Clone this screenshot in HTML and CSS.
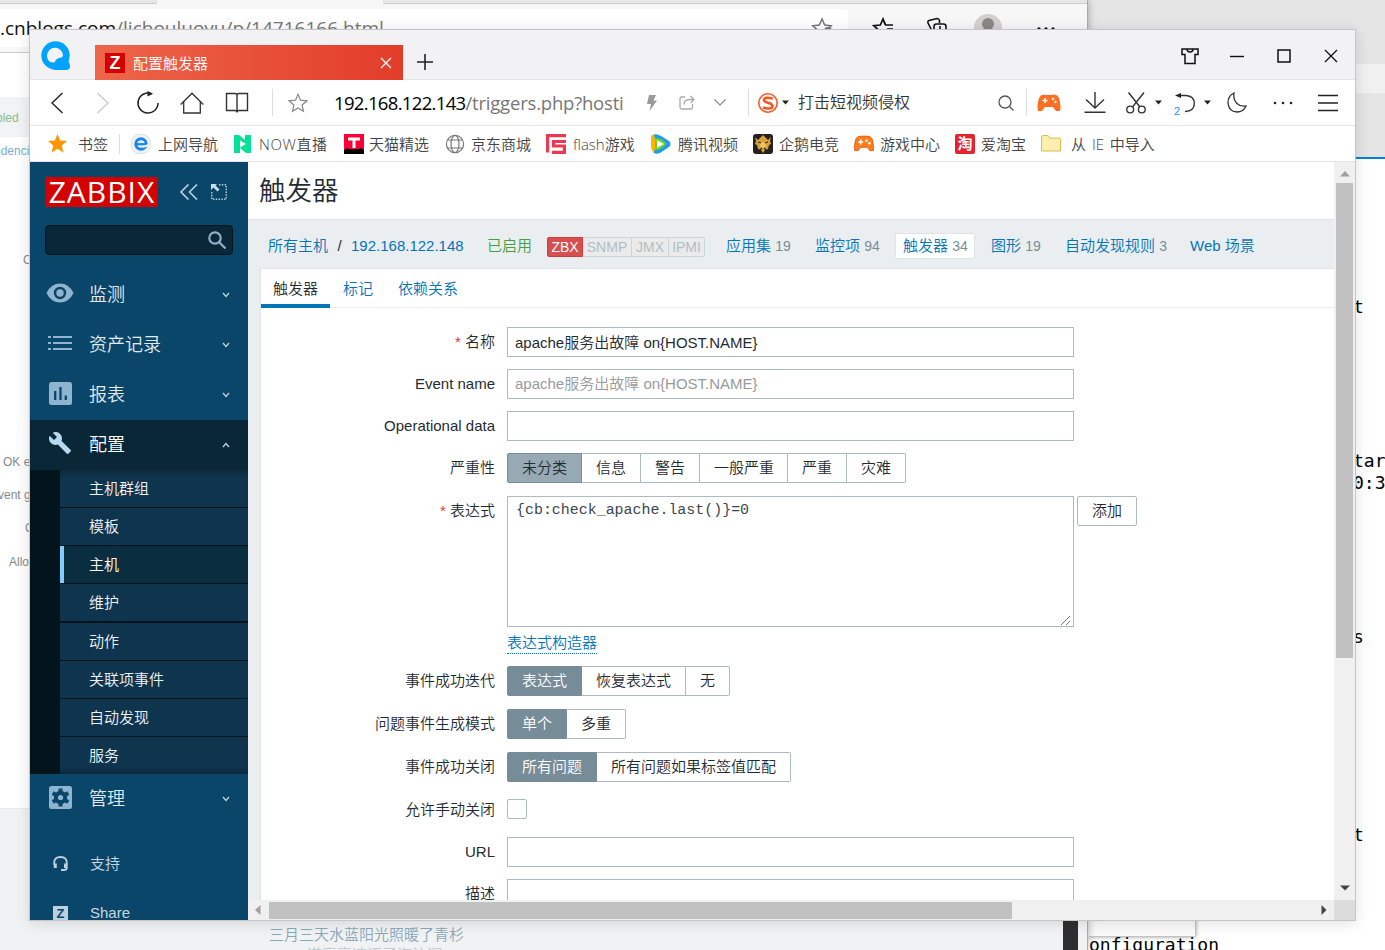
FILE: index.html
```html
<!DOCTYPE html>
<html lang="zh-CN">
<head>
  <meta charset="UTF-8" />
  <title>配置触发器</title>
  <link rel="stylesheet" href="styles.css">
</head>
<body>
<div class="desktop">

  <!-- terminal window in the back -->
  <div class="term-head"><div class="term-strip"></div></div>
  <div class="term-popup"></div>
  <span class="term t1">t</span>
  <span class="term t2">tar</span>
  <span class="term t3">0:3</span>
  <span class="term t4">s</span>
  <span class="term t5">t</span>
  <span class="term t6">onfiguration</span>
  <div class="dark-bar"></div>

  <!-- blog window in the back -->
  <div class="blog">
    <div class="blog-tabs"><div class="blog-tab"></div></div>
    <div class="blog-bar">
      <div class="blog-url">
        <span><b>.cnblogs.com</b>/lichouluoyu/p/14716166.html</span>
        <svg width="22" height="22" viewBox="0 0 22 22" fill="none" stroke="#777" stroke-width="1.5"><path d="M11 2l2.700 6 6.500.7-4.800 4.400 1.300 6.400L11 16.200l-5.700 3.300 1.300-6.400L1.800 8.700 8.300 8z"/><circle cx="17" cy="14" r="4" fill="#777" stroke="none"/></svg>
      </div>
      <div class="blog-icons">
        <svg width="22" height="22" viewBox="0 0 22 22" fill="none" stroke="#111" stroke-width="1.700"><path d="M13 7.500L11 2 8.300 8 1.800 8.700l4.800 4.400-1.300 6.400M11 2l2.700 6H21M15 12h6"/></svg>
        <svg width="22" height="22" viewBox="0 0 22 22" fill="none" stroke="#111" stroke-width="1.600"><path d="M6 14L2 6q-.5-2 1-2.500l8-2q2 0 2.500 2V6"/><rect x="8" y="7" width="12" height="12" rx="2.500"/><path d="M14 9v8"/></svg>
        <svg width="28" height="28" viewBox="0 0 28 28"><circle cx="14" cy="14" r="14" fill="#d2d0ce"/><circle cx="14" cy="10" r="6" fill="#8a8886"/></svg>
        <svg width="20" height="22" viewBox="0 0 20 22" fill="#111"><circle cx="3" cy="12" r="1.700"/><circle cx="10" cy="12" r="1.700"/><circle cx="17" cy="12" r="1.700"/></svg>
      </div>
    </div>
    <div class="blog-row"></div>
    <div class="blog-foot"></div>
    <span class="ghost g1">bled</span>
    <span class="ghost g2">ndencies</span>
    <span class="ghost g3">OK</span>
    <span class="ghost g4">OK event</span>
    <span class="ghost g5">vent generation</span>
    <span class="ghost g6">OK</span>
    <span class="ghost g7">Allow</span>
    <span class="poem p1">三月三天水蓝阳光照暖了青杉</span>
    <span class="poem p2">一道亮亮遮语了海沽润</span>
  </div>

  <div class="window">
    <div class="titlebar">
      <div class="logo">
        <svg width="30" height="30" viewBox="0 0 30 30"><circle cx="14.500" cy="14.500" r="14.200" fill="#00a3ff"/><path d="M18 20h9q2 2 2 5 0 4-4 4H13z" fill="#00a3ff"/><path d="M8.500 20.500A8 8 0 1 1 22 15q-1 2-4 2-3.500 1-4.500 4.500-3 .3-5-1z" fill="#f3f3f5"/></svg>
      </div>
      <div class="tab">
        <span class="tab-icon">Z</span>
        <span class="tab-text">配置触发器</span>
        <svg width="12" height="12" viewBox="0 0 12 12" stroke="#fff" stroke-width="1.300"><path d="M1 1l10 10M11 1L1 11"/></svg>
      </div>
      <svg class="new-tab" width="18" height="18" viewBox="0 0 18 18" stroke="#222" stroke-width="1.600"><path d="M9 1v16M1 9h16"/></svg>
      <div class="win-btns">
        <svg width="20" height="18" viewBox="0 0 20 18" fill="none" stroke="#111" stroke-width="1.500"><path d="M2 2h16v5.500h-3V16.500H5V7.500H2z"/><path d="M7 2q0 3 3 3t3-3"/></svg>
        <svg width="14" height="14" viewBox="0 0 14 14" stroke="#111" stroke-width="1.400"><path d="M0 7.500h14"/></svg>
        <svg width="14" height="14" viewBox="0 0 14 14" fill="none" stroke="#111" stroke-width="1.500"><rect x="1" y="1" width="12" height="12"/></svg>
        <svg width="14" height="14" viewBox="0 0 14 14" stroke="#111" stroke-width="1.300"><path d="M1 1l12 12M13 1L1 13"/></svg>
      </div>
    </div>

    <div class="toolbar">
      <svg width="12" height="22" viewBox="0 0 12 22" fill="none" stroke="#222" stroke-width="1.400"><path d="M11.500 1L1 11l10.500 10"/></svg>
      <svg width="12" height="22" viewBox="0 0 12 22" fill="none" stroke="#ccc" stroke-width="1.400"><path d="M.5 1L11 11 .5 21"/></svg>
      <svg width="24" height="24" viewBox="0 0 24 24" fill="none" stroke="#222" stroke-width="1.500"><path d="M15.500 2.700A10 10 0 1 0 22 12"/><path d="M11.500 0v5.500l5.500-2.700z" fill="#222" stroke="none"/></svg>
      <svg width="24" height="22" viewBox="0 0 24 22" fill="none" stroke="#333" stroke-width="1.300"><path d="M.7 12.500L12 1.200l11.300 11.300M3.700 10v11h16.600V10"/></svg>
      <svg width="24" height="22" viewBox="0 0 24 22" fill="none" stroke="#333" stroke-width="1.400"><path d="M1.500 1.500H10q2 0 2 2 0-2 2-2h8.500v17H14q-2 0-2 2 0-2-2-2H1.500zM12 3.500v17"/></svg>
      <i class="sep"></i>
      <svg width="20" height="20" viewBox="0 0 20 20" fill="none" stroke="#888" stroke-width="1.200"><path d="M10 1.300l2.500 5.900 6.400.6-4.800 4.200 1.400 6.300L10 15l-5.500 3.300L5.900 12 1.100 7.800l6.400-.6z"/></svg>
      <span class="url"><b>192.168.122.143</b>/triggers.php?hosti</span>
      <svg width="10" height="16" viewBox="0 0 10 16" fill="#999"><path d="M2 0h7L6.500 5.500H10L2.500 16 4 9H0z"/></svg>
      <svg width="16" height="15" viewBox="0 0 16 15" fill="none" stroke="#aaa" stroke-width="1.300"><path d="M6 2H2.500Q1 2 1 3.500v9Q1 14 2.500 14h9.500q1.500 0 1.500-1.500V9M5 9.500Q5 4.500 11 4.500h4M11.500 1L15 4.500 11.500 8"/></svg>
      <svg width="12" height="7" viewBox="0 0 12 7" fill="none" stroke="#888" stroke-width="1.200"><path d="M.5.5L6 6l5.500-5.500"/></svg>
      <i class="sep"></i>
      <svg width="20" height="20" viewBox="0 0 20 20" fill="none"><circle cx="10" cy="10" r="9.200" stroke="#fd5522" stroke-width="1.600"/><path d="M14.800 5.500Q6 3.500 6 7c0 3.300 8.500 2 8.500 6 0 3.500-6 2.800-9.500 1.500" stroke="#fd5522" stroke-width="2.600"/></svg>
      <svg width="7" height="5" viewBox="0 0 7 5" fill="#222"><path d="M0 .5h7L3.500 4.500z"/></svg>
      <span class="search-text">打击短视频侵权</span>
      <svg width="16" height="16" viewBox="0 0 16 16" fill="none" stroke="#555" stroke-width="1.300"><circle cx="7" cy="7" r="6"/><path d="M11.500 11.500l4 4"/></svg>
      <i class="sep"></i>
      <svg width="24" height="18" viewBox="0 0 24 18"><path d="M5 1q2-1 4 0h6q2-1 4 0 3 1 4 7 1 6 0 9h-4l-3-4H8l-3 4H1Q0 14 1 8q1-6 4-7z" fill="#ff6f1f"/><path d="M8 4v5M5.500 6.500h5" stroke="#fff" stroke-width="1.600"/><circle cx="16" cy="5" r="1.200" fill="#fff"/><circle cx="18.500" cy="8" r="1.200" fill="#fff"/></svg>
      <svg width="22" height="22" viewBox="0 0 22 22" fill="none" stroke="#333" stroke-width="1.400"><path d="M11 0v16M2 7.500l9 8.500 9-8.500M.5 20.200h21"/></svg>
      <svg width="20" height="22" viewBox="0 0 20 22" fill="none" stroke="#333" stroke-width="1.400"><path d="M2.500.5L14 15M18 .5L6.500 15"/><circle cx="4.200" cy="17.500" r="3.400"/><circle cx="15.800" cy="17.500" r="3.400"/></svg>
      <svg width="7" height="5" viewBox="0 0 7 5" fill="#222"><path d="M0 .5h7L3.500 4.500z"/></svg>
      <span class="undo">
        <svg width="20" height="20" viewBox="0 0 20 20" fill="none" stroke="#333" stroke-width="1.400"><path d="M3 2.500h8q8.300.5 8.300 8 0 7.500-9.300 8"/><path d="M0 2.500L6 0v5z" fill="#222" stroke="none"/></svg>
        <small>2</small>
      </span>
      <svg width="7" height="5" viewBox="0 0 7 5" fill="#222"><path d="M0 .5h7L3.500 4.500z"/></svg>
      <svg width="20" height="21" viewBox="0 0 20 21" fill="none" stroke="#333" stroke-width="1.300"><path d="M7 1Q1 4 1 10.500 1.500 19.500 10 20q6.500 0 9-6-5.500 1-9-2.500Q6 7.500 7 1z"/></svg>
      <svg width="20" height="4" viewBox="0 0 20 4" fill="#222"><circle cx="2" cy="2" r="1.300"/><circle cx="10" cy="2" r="1.300"/><circle cx="18" cy="2" r="1.300"/></svg>
      <svg width="20" height="18" viewBox="0 0 20 18" stroke="#222" stroke-width="1.400"><path d="M0 1.500h20M0 9h20M0 16.500h20"/></svg>
    </div>

    <div class="bookmarks">
      <div class="bm wide"><svg width="19" height="19" viewBox="0 0 19 19"><path d="M9.500 0l2.700 6.400 6.800.6-5.200 4.500 1.600 7-5.900-3.700-5.900 3.700 1.600-7L0 7l6.800-.6z" fill="#ff9500"/></svg>书签<i></i></div>
      <div class="bm"><svg width="20" height="20" viewBox="0 0 20 20"><rect x=".5" y=".5" width="19" height="19" rx="8" fill="#f1f3f5" stroke="#dde1e5"/><circle cx="10" cy="10" r="5.200" fill="none" stroke="#1586f5" stroke-width="3"/><path d="M6 10.200h9" stroke="#1586f5" stroke-width="2.200"/><path d="M12 13l5-1.800" stroke="#f1f3f5" stroke-width="2"/></svg>上网导航</div>
      <div class="bm now"><svg width="20" height="20" viewBox="0 0 20 20"><path d="M1 1h5l6 5V1h6v18h-5l-6-5v5H1z" fill="#00e29a"/><path d="M7 6.500l6 3.500-6 3.500z" fill="#fff"/></svg><span>NOW直播</span></div>
      <div class="bm t"><svg width="20" height="20" viewBox="0 0 20 20"><path d="M0 0h20v20H0z" fill="#ff0036"/><path d="M0 16q2-1 3-2l2 1h10l2-1q1 1 3 2v4H0z" fill="#000"/><path d="M4 5h12M10 5v9" stroke="#fff" stroke-width="3"/></svg>天猫精选</div>
      <div class="bm s6"><svg width="20" height="20" viewBox="0 0 20 20" fill="none" stroke="#777" stroke-width="1.200"><circle cx="10" cy="10" r="8.600"/><ellipse cx="10" cy="10" rx="4" ry="8.600"/><path d="M2.500 6h15M2.500 14h15"/></svg>京东商城</div>
      <div class="bm flash"><svg width="20" height="20" viewBox="0 0 20 20" fill="none" stroke="#e93a52" stroke-width="3.200"><path d="M20 1.600H1.600v17M20 7.500H7.500v4.500M6 12h12.400v6.400H6"/></svg><span>flash</span>游戏</div>
      <div class="bm"><svg width="20" height="20" viewBox="0 0 20 20"><path d="M2 1q3-2 8 1l8 5q3 3 0 6l-9 6q-5 2-7-1z" fill="#1c9cf5"/><path d="M0 4q0-4 3-3l2 9-2 9q-3-3-3-7z" fill="#ffb400"/><path d="M4 4q8 0 11 6-4 6-11 6z" fill="#6fd126"/><path d="M6 6l7 4-7 4z" fill="#fff"/></svg>腾讯视频</div>
      <div class="bm s6"><svg width="20" height="20" viewBox="0 0 20 20"><rect width="20" height="20" rx="3" fill="#24211f"/><path d="M2 3l3 3 2-2 3-3 3 3 2 2 3-3-1 4 1 3-2 1-1 4-3 1-2 3-2-3-3-1-1-4-2-1 1-3z" fill="#d9a13a"/><circle cx="10" cy="11" r="2.800" fill="#f0c66a"/><path d="M5 8l3 1M15 8l-3 1M7 16l2-2M13 16l-2-2" stroke="#3a2a14" stroke-width="1.300" fill="none"/></svg>企鹅电竞</div>
      <div class="bm s6"><svg width="20" height="18" viewBox="0 0 24 20"><path d="M5 1q7-1 14 0 3 1 4 8 1 6 0 9h-4l-3-4H8l-3 4H1Q0 15 1 9q1-7 4-8z" fill="#ff7d1a" stroke="#e0560a"/><path d="M8 4.500v6M5 7.500h6" stroke="#fff" stroke-width="1.800"/><circle cx="15" cy="6" r="1.500" fill="#fff"/><circle cx="18.500" cy="9" r="1.500" fill="#fff"/></svg>游戏中心</div>
      <div class="bm s6"><span class="tao">淘</span>爱淘宝</div>
      <div class="bm folder"><svg width="20" height="17" viewBox="0 0 20 17"><path d="M.6 16V1.600Q.6.600 1.600.6H7l2 2.500h9.500q1 0 1 1V16z" fill="#fff0ad" stroke="#dcb857"/></svg><span>从 IE 中导入</span></div>
    </div>

    <div class="content">
      <aside class="sidebar">
        <div class="brand">
          <span class="zabbix">ZABBIX</span>
          <svg width="18" height="16" viewBox="0 0 18 16" fill="none" stroke="#b7cbd8" stroke-width="1.700"><path d="M8.500.5L1 8l7.500 7.500M17 .5L9.500 8l7.500 7.500"/></svg>
          <svg width="16" height="16" viewBox="0 0 16 16" fill="none"><path d="M8 .8h7.300v14.400H.8V8" stroke="#b7cbd8" stroke-width="1.500" stroke-dasharray="1.500 1.300"/><path d="M0 0h6L4.500 1.500l4 4-2 2-4-4L0 6z" fill="#cddde6"/></svg>
        </div>
        <div class="search">
          <svg width="19" height="19" viewBox="0 0 19 19" fill="none" stroke="#8fb0c6" stroke-width="2.200"><circle cx="7" cy="7" r="5.700"/><path d="M11 11l6.500 6.500"/></svg>
        </div>
        <nav class="menu">
          <a class="item">
            <svg width="28" height="20" viewBox="0 0 28 20"><path d="M14 .5Q23 .5 27.500 10 23 19.500 14 19.500T.5 10Q5 .5 14 .5z" fill="#8fb4d0"/><circle cx="14" cy="10" r="6.200" fill="#0a466a"/><circle cx="14" cy="10" r="3.700" fill="#8fb4d0"/></svg>
            <span>监测</span><svg class="arr" width="8" height="6" viewBox="0 0 8 6"><path d="M1 1l3 3.500L7 1"/></svg>
          </a>
          <a class="item">
            <svg width="24" height="14" viewBox="0 0 24 14" stroke="#8fb4d0" stroke-width="2"><path d="M0 1h3M5 1h19M0 7h3M5 7h19M0 13h3M5 13h19"/></svg>
            <span>资产记录</span><svg class="arr" width="8" height="6" viewBox="0 0 8 6"><path d="M1 1l3 3.500L7 1"/></svg>
          </a>
          <a class="item">
            <svg width="23" height="23" viewBox="0 0 23 23"><rect width="23" height="23" rx="2.500" fill="#8fb4d0"/><path d="M6.200 9v9M11.500 5v13M16.800 13.500V18" stroke="#0a466a" stroke-width="2.300"/></svg>
            <span>报表</span><svg class="arr" width="8" height="6" viewBox="0 0 8 6"><path d="M1 1l3 3.500L7 1"/></svg>
          </a>
          <a class="item open">
            <svg width="24" height="24" viewBox="0 0 24 24"><path d="M22.700 19l-9.100-9.100c.9-2.300.4-5-1.500-6.900-2-2-5-2.400-7.400-1.300L9 6 6 9 1.600 4.700C.4 7.100.9 10.100 2.900 12.100c1.900 1.900 4.600 2.400 6.900 1.500l9.100 9.100c.4.4 1 .4 1.400 0l2.300-2.300c.5-.4.5-1.100.1-1.400z" fill="#b7d9f0"/></svg>
            <span>配置</span><svg class="arr" width="8" height="6" viewBox="0 0 8 6"><path d="M1 5l3-3.500L7 5"/></svg>
          </a>
          <div class="submenu">
            <a>主机群组</a>
            <a>模板</a>
            <a class="active">主机</a>
            <a class="last">维护</a>
            <a>动作</a>
            <a>关联项事件</a>
            <a>自动发现</a>
            <a>服务</a>
          </div>
          <a class="item">
            <svg width="23" height="23" viewBox="0 0 23 23"><rect width="23" height="23" rx="2.500" fill="#8fb4d0"/><circle cx="11.500" cy="11.500" r="4.600" fill="none" stroke="#0a466a" stroke-width="4.200"/><path d="M11.500 2.500v18M3.700 7l15.600 9M3.700 16l15.600-9" stroke="#0a466a" stroke-width="4"/><circle cx="11.500" cy="11.500" r="2.600" fill="#8fb4d0"/></svg>
            <span>管理</span><svg class="arr" width="8" height="6" viewBox="0 0 8 6"><path d="M1 1l3 3.500L7 1"/></svg>
          </a>
        </nav>
        <nav class="links">
          <a class="item">
            <svg width="15" height="15" viewBox="0 0 15 15" fill="none" stroke="#bdd0dd" stroke-width="1.800"><path d="M1.200 9V7q0-6 6.300-6t6.300 6v5q0 2-3 2H8"/><path d="M2.300 7.500v4.500M12.500 7.500v4.500" stroke-width="3"/></svg>
            <span>支持</span>
          </a>
          <a class="item">
            <span class="zicon">Z</span>
            <span>Share</span>
          </a>
        </nav>
      </aside>

      <main class="page">
        <header class="page-head"><h1>触发器</h1></header>
        <div class="host-nav">
          <a class="hosts">所有主机</a><em>/</em><a class="host">192.168.122.148</a>
          <span class="enabled">已启用</span>
          <div class="avail"><b>ZBX</b><span class="snmp">SNMP</span><span class="jmx">JMX</span><span class="ipmi">IPMI</span></div>
          <a class="n1">应用集 <sup>19</sup></a>
          <a class="n2">监控项 <sup>94</sup></a>
          <a class="n3 selected">触发器 <sup>34</sup></a>
          <a class="n4">图形 <sup>19</sup></a>
          <a class="n5">自动发现规则 <sup>3</sup></a>
          <a class="n6">Web 场景</a>
        </div>
        <div class="form">
          <div class="tabs"><a class="current">触发器</a><a>标记</a><a>依赖关系</a></div>
          <div class="rows">
            <div class="row"><label class="req">名称</label><div class="input">apache服务出故障 on{HOST.NAME}</div></div>
            <div class="row"><label>Event name</label><div class="input hint">apache服务出故障 on{HOST.NAME}</div></div>
            <div class="row"><label>Operational data</label><div class="input"></div></div>
            <div class="row seg-row"><label>严重性</label>
              <div class="seg severity"><span class="on">未分类</span><span>信息</span><span>警告</span><span class="avg">一般严重</span><span>严重</span><span>灾难</span></div>
            </div>
            <div class="row expr"><label class="req">表达式</label>
              <div class="area">{cb:check_apache.last()}=0<svg width="9" height="9" viewBox="0 0 9 9" stroke="#777"><path d="M0 9l9-9M5 9l4-4"/></svg></div>
              <div class="btn">添加</div>
            </div>
            <div class="row builder"><label></label><a>表达式构造器</a></div>
            <div class="row seg-row"><label>事件成功迭代</label>
              <div class="seg"><span class="on">表达式</span><span>恢复表达式</span><span>无</span></div>
            </div>
            <div class="row seg-row"><label>问题事件生成模式</label>
              <div class="seg"><span class="on">单个</span><span>多重</span></div>
            </div>
            <div class="row seg-row"><label>事件成功关闭</label>
              <div class="seg"><span class="on">所有问题</span><span>所有问题如果标签值匹配</span></div>
            </div>
            <div class="row"><label>允许手动关闭</label><div class="check"></div></div>
            <div class="row"><label>URL</label><div class="input"></div></div>
            <div class="row"><label>描述</label><div class="input"></div></div>
          </div>
        </div>
      </main>

      <div class="vscroll">
        <svg width="10" height="6" viewBox="0 0 10 6" fill="#a0a0a0"><path d="M0 5.500L5 0l5 5.500z"/></svg>
        <div class="vthumb"></div>
        <svg class="down" width="10" height="6" viewBox="0 0 10 6" fill="#444"><path d="M0 .5h10L5 5.500z"/></svg>
      </div>
      <div class="hscroll">
        <svg width="6" height="10" viewBox="0 0 6 10" fill="#a0a0a0"><path d="M5.500 0v10L0 5z"/></svg>
        <div class="hthumb"></div>
        <svg class="right" width="6" height="10" viewBox="0 0 6 10" fill="#444"><path d="M.5 0v10l5-5z"/></svg>
      </div>
      <div class="corner"></div>
    </div>
  </div>
</div>
</body>
</html>
```
FILE: styles.css
```css
* {
  box-sizing: border-box;
}
body {
  margin: 0;
  font-family: "Liberation Sans", "Noto Sans CJK SC", sans-serif;
  font-size: 15px;
  font-weight: 350;
  color: #1f2c33;
}
svg {
  display: block;
  flex: none;
}
.desktop {
  position: relative;
  width: 1385px;
  height: 950px;
  overflow: hidden;
  background: #fff;
}

/* windows behind */
.term-head {
  position: absolute;
  left: 1088px;
  top: 0;
  width: 297px;
  height: 159px;
  padding-top: 64px;
  background: #e5e5e5;
  border-bottom: 2px solid #0082d9;
}
.term-strip {
  height: 29px;
  background: #f0f0f0;
}
.term {
  position: absolute;
  font-family: "DejaVu Sans Mono", monospace;
  font-size: 18px;
  font-weight: 400;
  line-height: 22px;
  color: #000;
  white-space: nowrap;
}
.t1 { left: 1353px; top: 296px; }
.t2 { left: 1353px; top: 450px; }
.t3 { left: 1353px; top: 472px; }
.t4 { left: 1353px; top: 626px; }
.t5 { left: 1353px; top: 824px; }
.t6 { left: 1089px; top: 934px; }
.term-popup {
  position: absolute;
  left: 1088px;
  top: 900px;
  width: 107px;
  height: 36px;
  background: #fafafa;
  box-shadow: 1px 1px 4px rgba(0, 0, 0, 0.4);
}
.dark-bar {
  position: absolute;
  z-index: 1;
  left: 1063px;
  top: 900px;
  width: 15px;
  height: 50px;
  background: #2f2f2f;
}
.blog {
  position: absolute;
  left: 0;
  top: 0;
  width: 1088px;
  height: 950px;
  overflow: hidden;
  background: #fff;
  border-right: 1px solid #aaa;
  box-shadow: 0 0 8px rgba(0, 0, 0, 0.3);
  clip-path: inset(0 -12px 0 0);
}
.blog-tabs {
  height: 4px;
  background: #e6e6e6;
  border-bottom: 1px solid #ccc;
}
.blog-tab {
  width: 226px;
  height: 4px;
  margin-left: 157px;
  background: #f7f7f7;
}
.blog-bar {
  display: flex;
  height: 49px;
  padding-top: 5px;
  background: #f7f7f7;
  border-bottom: 1px solid #c8c8c8;
}
.blog-url {
  display: flex;
  justify-content: space-between;
  width: 848px;
  height: 38px;
  padding-right: 15px;
  border-radius: 0 5px 5px 0;
  background: #fff;
  font-family: "Open Sans", sans-serif;
  font-size: 19px;
  font-weight: 400;
  line-height: 38px;
  color: #777;
}
.blog-url b {
  font-weight: 400;
  color: #111;
}
.blog-url svg {
  margin-top: 8px;
}
.blog-icons {
  display: flex;
  gap: 32px;
  padding: 8px 0 0 24px;
}
.blog-icons svg:nth-child(3) {
  margin: -3px 0 0 -6px;
}
.blog-icons svg:nth-child(4) {
  margin-left: 2px;
}
.blog-row {
  height: 40px;
  margin-top: 44px;
  background: #f1f3f4;
}
.blog-foot {
  height: 142px;
  margin-top: 671px;
  background: #f0f2f4;
  border-top: 1px solid #e6e8ea;
}
.ghost {
  position: absolute;
  font-size: 12px;
  line-height: 14px;
  color: #888;
  white-space: nowrap;
}
.g1 { left: -4px; top: 111px; color: #86bd8d; }
.g2 { left: -6px; top: 144px; color: #80aec9; }
.g3 { left: 23px; top: 253px; }
.g4 { left: 3px; top: 455px; }
.g5 { left: -2px; top: 488px; }
.g6 { left: 25px; top: 521px; }
.g7 { left: 9px; top: 555px; }
.poem {
  position: absolute;
  line-height: 20px;
  color: #8ba7b6;
  white-space: nowrap;
}
.p1 { left: 269px; top: 925px; }
.p2 { left: 292px; top: 945px; color: #bccad3; }

/* browser window */
.window {
  position: absolute;
  z-index: 2;
  left: 29px;
  top: 29px;
  width: 1327px;
  height: 892px;
  display: flex;
  flex-direction: column;
  border: 1px solid #c3c6c8;
  background: #fff;
  box-shadow: 0 2px 14px rgba(0, 0, 0, 0.12);
}
.titlebar {
  display: flex;
  align-items: flex-end;
  height: 50px;
  background: #f2f2f5;
  border-bottom: 1px solid #e3e4e6;
}
.logo {
  width: 65px;
  padding: 0 0 8px 11px;
}
.tab {
  display: flex;
  align-items: center;
  width: 308px;
  height: 35px;
  margin-bottom: -1px;
  padding: 0 11px 0 10px;
  color: #fff;
  background: linear-gradient(90deg, #ee6549, #e23d2a);
}
.tab-icon {
  width: 20px;
  height: 20px;
  margin-right: 8px;
  background: #d40000;
  font-size: 18px;
  font-weight: 700;
  line-height: 20px;
  text-align: center;
}
.tab-text {
  flex: 1;
}
.new-tab {
  margin: 0 0 8px 13px;
}
.win-btns {
  display: flex;
  align-items: center;
  gap: 33px;
  height: 50px;
  margin-left: auto;
  padding: 3px 17px 0 0;
}
.win-btns svg:nth-child(1) {
  margin-right: -3px;
}
.toolbar {
  display: grid;
  grid-template-columns: 46px 46px 44px 44px 46px 24px 28px 322px 36px 34px 32px 24px 16px 18px 196px 32px 8px 38px 54px 28px 16px 38px 6px 54px 38px 52px;
  justify-items: center;
  align-items: center;
  height: 46px;
  padding-left: 4px;
  border-bottom: 1px solid #e3e4e6;
}
.sep {
  width: 1px;
  height: 27px;
  background: #ddd;
}
.url {
  justify-self: start;
  width: 311px;
  padding-left: 22px;
  overflow: hidden;
  font-family: "Open Sans", sans-serif;
  font-size: 18.500px;
  font-weight: 400;
  line-height: 28px;
  letter-spacing: -0.200px;
  white-space: nowrap;
  color: #777;
}
.url b {
  font-weight: 400;
  letter-spacing: -0.670px;
  color: #000;
}
.search-text {
  justify-self: start;
  padding-left: 4px;
  font-size: 16px;
  line-height: 24px;
  color: #333;
}
.undo {
  position: relative;
}
.undo small {
  position: absolute;
  left: -1px;
  top: 12px;
  font-size: 11px;
  line-height: 12px;
  color: #1890ff;
}
.bookmarks {
  display: grid;
  grid-template-columns: 83px 102px 111px 101px 101px 105px 102px 101px 101px 86px 130px;
  align-items: center;
  height: 36px;
  padding-left: 18px;
  border-bottom: 1px solid #e3e4e6;
  color: #444;
}
.bm {
  display: flex;
  align-items: center;
  gap: 7px;
  white-space: nowrap;
}
.bm.t {
  gap: 5px;
}
.bm.s6,
.bm.now {
  gap: 6px;
}
.bm.wide {
  gap: 11px;
}
.bm.wide i {
  width: 1px;
  height: 20px;
  background: #ddd;
}
.bm.flash {
  gap: 0;
}
.bm.flash span {
  margin-left: 7px;
  font-family: "Open Sans", sans-serif;
}
.bm.now span {
  font-family: "Open Sans", "Noto Sans CJK SC", sans-serif;
  letter-spacing: 0.600px;
}
.bm.folder {
  gap: 10px;
}
.bm.folder span {
  font-family: "Open Sans", "Noto Sans CJK SC", sans-serif;
  word-spacing: 2px;
}
.tao {
  width: 20px;
  height: 20px;
  border-radius: 2px;
  background: #e5232f;
  color: #fff;
  font-weight: 700;
  line-height: 19px;
  text-align: center;
}

.content {
  display: grid;
  grid-template-columns: 218px 1086px 21px;
  grid-template-rows: 738px 20px;
  overflow: hidden;
}

/* sidebar */
.sidebar {
  grid-row: 1 / 3;
  overflow: hidden;
  background: #0a466a;
}
.brand {
  display: flex;
  align-items: center;
  padding: 15px 0 0 15px;
}
.zabbix {
  width: 113px;
  height: 30px;
  margin-right: 22px;
  padding-left: 1px;
  background: #d40000;
  color: #fff;
  font-family: "Open Sans", sans-serif;
  font-size: 30px;
  font-weight: 400;
  letter-spacing: 1px;
  line-height: 29px;
  text-align: center;
}
.brand svg + svg {
  margin-left: 13px;
}
.search {
  display: flex;
  justify-content: flex-end;
  align-items: center;
  width: 188px;
  height: 30px;
  margin: 18px 0 15px 15px;
  padding-right: 5px;
  border: 1px solid #04141c;
  border-radius: 4px;
  background: #0a2737;
}
.item {
  display: grid;
  grid-template-columns: 30px 1fr 8px;
  align-items: center;
  height: 50px;
  padding: 0 18px 0 15px;
  column-gap: 14px;
  color: #e3eaee;
  font-size: 18px;
}
.item > span {
  margin-top: -4px;
}
.item > :first-child {
  justify-self: center;
  margin-top: -4px;
}
.arr {
  fill: none;
  stroke: #c3d3dd;
  stroke-width: 1.3;
}
.item.open {
  background: #0a2737;
  color: #fff;
}
.submenu {
  padding-left: 30px;
  background: #04141c;
}
.submenu a {
  display: block;
  height: 38px;
  padding-left: 29px;
  border-bottom: 1px solid #04141c;
  background: #0f344d;
  line-height: 37px;
  color: #f0f3f5;
}
.submenu a:first-child {
  box-shadow: inset 0 6px 5px -4px #0a2737;
}
.submenu a.active {
  background: #0b2d40;
  box-shadow: inset 4px 0 0 #80cbff;
  color: #fff;
}
.submenu a.last {
  height: 39px;
  border-bottom-width: 2px;
}
.submenu a:last-child {
  height: 37px;
  border: 0;
  box-shadow: inset 0 -6px 5px -4px #0a2737;
}
.links {
  padding-top: 14px;
}
.links .item {
  padding-left: 16px;
  grid-template-columns: 29px 1fr 8px;
  column-gap: 15px;
  font-size: 15px;
  color: #c9d7e0;
}
.links .item > span {
  margin-top: -1px;
}
.links .item > :first-child {
  margin-top: 0;
}
.zicon {
  width: 15px;
  height: 15px;
  background: #bdd0dd;
  color: #0a466a;
  font-size: 13px;
  font-weight: 700;
  line-height: 15px;
  text-align: center;
}

/* page */
.page {
  display: flex;
  flex-direction: column;
  overflow: hidden;
  background: #ebeef0;
}
.page-head {
  flex: none;
  height: 58px;
  padding-left: 11px;
  border-bottom: 1px solid #dfe4e7;
  background: #fff;
}
.page-head h1 {
  margin: 0;
  font-size: 26.500px;
  font-weight: 350;
  line-height: 59px;
}
.host-nav {
  display: flex;
  flex: none;
  align-items: center;
  height: 48px;
  padding: 4px 0 0 20px;
  white-space: nowrap;
  line-height: 24px;
}
.host-nav a,
.builder a,
.tabs a {
  color: #0275b8;
}
.host-nav em {
  width: 23px;
  font-style: normal;
  text-align: center;
}
.host {
  width: 136px;
}
.enabled {
  width: 60px;
  color: #429e47;
}
.avail {
  display: flex;
  width: 158px;
  height: 20px;
  margin: 1px 21px 0 0;
  border: 1px solid #ccd5d9;
  border-radius: 2px;
  background: #ebebeb;
  font-size: 14px;
  line-height: 19px;
  color: #b0bec5;
  text-align: center;
}
.avail b {
  width: 36px;
  margin: -1px 0 -1px -1px;
  border: 1px solid #d23d3d;
  border-radius: 2px 0 0 2px;
  background: #d64e4e;
  color: #fff;
  font-weight: 400;
}
.snmp { width: 48px; }
.jmx { width: 37px; }
.ipmi { flex: 1; }
.jmx,
.ipmi {
  border-left: 1px solid #ccd5d9;
}
.host-nav sup {
  font-size: 14px;
  line-height: 1;
  vertical-align: baseline;
  color: #768d99;
}
.n1 { width: 89px; }
.n2 { width: 80px; }
.host-nav .selected {
  width: 80px;
  height: 26px;
  margin-right: 16px;
  padding-left: 7px;
  border: 1px solid #dfe4e7;
  border-radius: 2px;
  background: #fff;
}
.n4 { width: 74px; }
.n5 { width: 125px; }
.form {
  flex: 1;
  margin-left: 12px;
  border: solid #dfe4e7;
  border-width: 1px 0 0 1px;
  background: #fff;
}
.tabs {
  display: flex;
  height: 39px;
  border-bottom: 1px solid #ebeef0;
  line-height: 39px;
}
.tabs a {
  height: 39px;
  margin-right: 1px;
  padding: 0 12px;
}
.tabs .current {
  border-bottom: 4px solid #0275b8;
  color: #1f2c33;
}
.rows {
  padding-top: 19px;
}
.row {
  display: grid;
  grid-template-columns: 234px 567px 60px;
  height: 30px;
  margin-bottom: 12px;
  column-gap: 12px;
}
.seg-row {
  height: 31px;
}
.row label {
  text-align: right;
  line-height: 29px;
}
.req::before {
  content: "* ";
  color: #e33734;
}
.input {
  height: 30px;
  padding-left: 7px;
  border: 1px solid #acbbc2;
  line-height: 29px;
}
.hint {
  line-height: 28px;
  color: #9a9a9a;
}
.seg {
  display: flex;
  justify-self: start;
  height: 30px;
  line-height: 28px;
}
.seg span {
  padding: 0 14px;
  border: 1px solid #acbbc2;
  border-left: 0;
}
.seg .avg {
  padding-right: 13px;
}
.seg span:last-child {
  border-radius: 0 2px 2px 0;
}
.seg .on {
  border: 1px solid #768d99;
  border-radius: 2px 0 0 2px;
  background: #768d99;
  color: #fff;
}
.severity .on {
  background: #97aab3;
  color: #1f2c33;
}
.row.expr {
  height: 131px;
  margin-bottom: 0;
}
.area {
  position: relative;
  padding: 4px 8px;
  border: 1px solid #acbbc2;
  font-family: "Liberation Mono", monospace;
  font-size: 14.950px;
  line-height: 19px;
  color: #3c474d;
}
.area svg {
  position: absolute;
  right: 3px;
  bottom: 1px;
}
.btn {
  width: 60px;
  height: 30px;
  margin-left: -9px;
  border: 1px solid #acbbc2;
  border-radius: 2px;
  line-height: 28px;
  text-align: center;
}
.row.builder {
  height: 39px;
  margin-bottom: 0;
}
.builder a {
  justify-self: start;
  height: 20px;
  margin-top: 7px;
  border-bottom: 1px dotted #0275b8;
  line-height: 18px;
}
.check {
  width: 20px;
  height: 20px;
  margin-top: 4px;
  border: 1px solid #acbbc2;
  border-radius: 2px;
}

/* scrollbars */
.vscroll,
.hscroll {
  display: flex;
  align-items: center;
  background: #f0f0f0;
}
.vscroll {
  flex-direction: column;
  padding: 9px 0 9px;
}
.vthumb {
  width: 17px;
  height: 475px;
  margin-top: 6px;
  background: #c1c1c1;
}
.down {
  margin-top: auto;
}
.hscroll {
  padding: 0 7px;
}
.hthumb {
  width: 743px;
  height: 17px;
  margin-left: 8px;
  background: #c1c1c1;
}
.right {
  margin-left: auto;
}
.corner {
  background: #dcdcdc;
}
```
